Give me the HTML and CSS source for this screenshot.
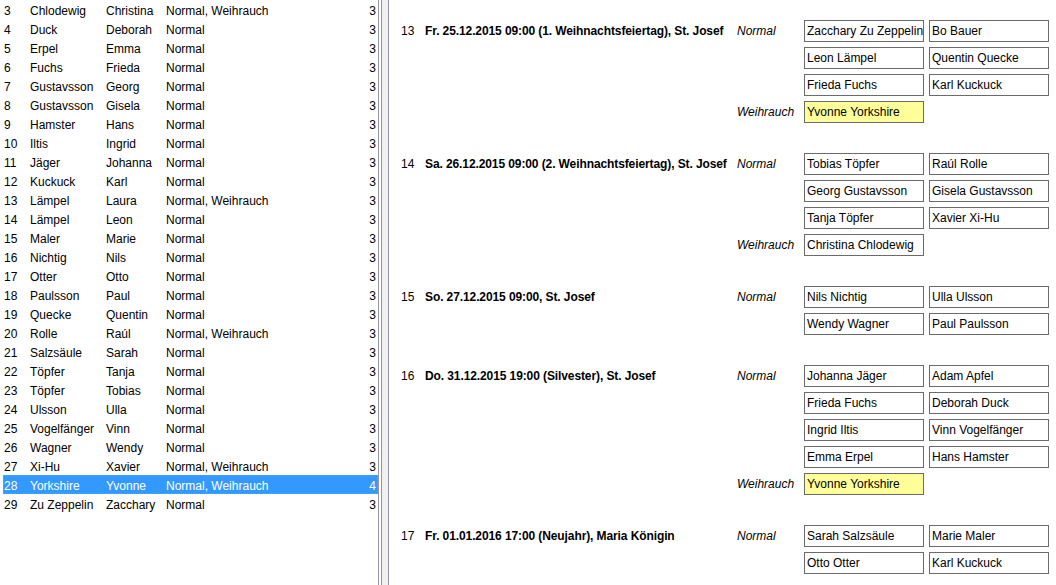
FILE: index.html
```html
<!DOCTYPE html>
<html lang="de">
<head>
<meta charset="utf-8">
<title>Messdiener</title>
<link rel="stylesheet" href="styles.css">
</head>
<body>
<div class="app">
  <div class="left">
    <div class="list">
      <div class="row"><span class="c-num">3</span><span class="c-last">Chlodewig</span><span class="c-first">Christina</span><span class="c-type">Normal, Weihrauch</span><span class="c-cnt">3</span></div>
      <div class="row"><span class="c-num">4</span><span class="c-last">Duck</span><span class="c-first">Deborah</span><span class="c-type">Normal</span><span class="c-cnt">3</span></div>
      <div class="row"><span class="c-num">5</span><span class="c-last">Erpel</span><span class="c-first">Emma</span><span class="c-type">Normal</span><span class="c-cnt">3</span></div>
      <div class="row"><span class="c-num">6</span><span class="c-last">Fuchs</span><span class="c-first">Frieda</span><span class="c-type">Normal</span><span class="c-cnt">3</span></div>
      <div class="row"><span class="c-num">7</span><span class="c-last">Gustavsson</span><span class="c-first">Georg</span><span class="c-type">Normal</span><span class="c-cnt">3</span></div>
      <div class="row"><span class="c-num">8</span><span class="c-last">Gustavsson</span><span class="c-first">Gisela</span><span class="c-type">Normal</span><span class="c-cnt">3</span></div>
      <div class="row"><span class="c-num">9</span><span class="c-last">Hamster</span><span class="c-first">Hans</span><span class="c-type">Normal</span><span class="c-cnt">3</span></div>
      <div class="row"><span class="c-num">10</span><span class="c-last">Iltis</span><span class="c-first">Ingrid</span><span class="c-type">Normal</span><span class="c-cnt">3</span></div>
      <div class="row"><span class="c-num">11</span><span class="c-last">Jäger</span><span class="c-first">Johanna</span><span class="c-type">Normal</span><span class="c-cnt">3</span></div>
      <div class="row"><span class="c-num">12</span><span class="c-last">Kuckuck</span><span class="c-first">Karl</span><span class="c-type">Normal</span><span class="c-cnt">3</span></div>
      <div class="row"><span class="c-num">13</span><span class="c-last">Lämpel</span><span class="c-first">Laura</span><span class="c-type">Normal, Weihrauch</span><span class="c-cnt">3</span></div>
      <div class="row"><span class="c-num">14</span><span class="c-last">Lämpel</span><span class="c-first">Leon</span><span class="c-type">Normal</span><span class="c-cnt">3</span></div>
      <div class="row"><span class="c-num">15</span><span class="c-last">Maler</span><span class="c-first">Marie</span><span class="c-type">Normal</span><span class="c-cnt">3</span></div>
      <div class="row"><span class="c-num">16</span><span class="c-last">Nichtig</span><span class="c-first">Nils</span><span class="c-type">Normal</span><span class="c-cnt">3</span></div>
      <div class="row"><span class="c-num">17</span><span class="c-last">Otter</span><span class="c-first">Otto</span><span class="c-type">Normal</span><span class="c-cnt">3</span></div>
      <div class="row"><span class="c-num">18</span><span class="c-last">Paulsson</span><span class="c-first">Paul</span><span class="c-type">Normal</span><span class="c-cnt">3</span></div>
      <div class="row"><span class="c-num">19</span><span class="c-last">Quecke</span><span class="c-first">Quentin</span><span class="c-type">Normal</span><span class="c-cnt">3</span></div>
      <div class="row"><span class="c-num">20</span><span class="c-last">Rolle</span><span class="c-first">Raúl</span><span class="c-type">Normal, Weihrauch</span><span class="c-cnt">3</span></div>
      <div class="row"><span class="c-num">21</span><span class="c-last">Salzsäule</span><span class="c-first">Sarah</span><span class="c-type">Normal</span><span class="c-cnt">3</span></div>
      <div class="row"><span class="c-num">22</span><span class="c-last">Töpfer</span><span class="c-first">Tanja</span><span class="c-type">Normal</span><span class="c-cnt">3</span></div>
      <div class="row"><span class="c-num">23</span><span class="c-last">Töpfer</span><span class="c-first">Tobias</span><span class="c-type">Normal</span><span class="c-cnt">3</span></div>
      <div class="row"><span class="c-num">24</span><span class="c-last">Ulsson</span><span class="c-first">Ulla</span><span class="c-type">Normal</span><span class="c-cnt">3</span></div>
      <div class="row"><span class="c-num">25</span><span class="c-last">Vogelfänger</span><span class="c-first">Vinn</span><span class="c-type">Normal</span><span class="c-cnt">3</span></div>
      <div class="row"><span class="c-num">26</span><span class="c-last">Wagner</span><span class="c-first">Wendy</span><span class="c-type">Normal</span><span class="c-cnt">3</span></div>
      <div class="row"><span class="c-num">27</span><span class="c-last">Xi-Hu</span><span class="c-first">Xavier</span><span class="c-type">Normal, Weihrauch</span><span class="c-cnt">3</span></div>
      <div class="row selected"><span class="c-num">28</span><span class="c-last">Yorkshire</span><span class="c-first">Yvonne</span><span class="c-type">Normal, Weihrauch</span><span class="c-cnt">4</span></div>
      <div class="row"><span class="c-num">29</span><span class="c-last">Zu Zeppelin</span><span class="c-first">Zacchary</span><span class="c-type">Normal</span><span class="c-cnt">3</span></div>
    </div>
  </div>
  <div class="splitter"></div>
  <div class="right">
    <div class="event">
      <span class="ev-num">13</span>
      <span class="ev-title">Fr. 25.12.2015 09:00 (1. Weihnachtsfeiertag), St. Josef</span>
      <div class="groups">
        <div class="group"><span class="g-label">Normal</span>
          <div class="boxes"><span class="box">Zacchary Zu Zeppelin</span><span class="box">Bo Bauer</span><span class="box">Leon Lämpel</span><span class="box">Quentin Quecke</span><span class="box">Frieda Fuchs</span><span class="box">Karl Kuckuck</span></div>
        </div>
        <div class="group"><span class="g-label">Weihrauch</span>
          <div class="boxes"><span class="box hl">Yvonne Yorkshire</span></div>
        </div>
      </div>
    </div>
    <div class="event">
      <span class="ev-num">14</span>
      <span class="ev-title">Sa. 26.12.2015 09:00 (2. Weihnachtsfeiertag), St. Josef</span>
      <div class="groups">
        <div class="group"><span class="g-label">Normal</span>
          <div class="boxes"><span class="box">Tobias Töpfer</span><span class="box">Raúl Rolle</span><span class="box">Georg Gustavsson</span><span class="box">Gisela Gustavsson</span><span class="box">Tanja Töpfer</span><span class="box">Xavier Xi-Hu</span></div>
        </div>
        <div class="group"><span class="g-label">Weihrauch</span>
          <div class="boxes"><span class="box">Christina Chlodewig</span></div>
        </div>
      </div>
    </div>
    <div class="event">
      <span class="ev-num">15</span>
      <span class="ev-title">So. 27.12.2015 09:00, St. Josef</span>
      <div class="groups">
        <div class="group"><span class="g-label">Normal</span>
          <div class="boxes"><span class="box">Nils Nichtig</span><span class="box">Ulla Ulsson</span><span class="box">Wendy Wagner</span><span class="box">Paul Paulsson</span></div>
        </div>
      </div>
    </div>
    <div class="event">
      <span class="ev-num">16</span>
      <span class="ev-title">Do. 31.12.2015 19:00 (Silvester), St. Josef</span>
      <div class="groups">
        <div class="group"><span class="g-label">Normal</span>
          <div class="boxes"><span class="box">Johanna Jäger</span><span class="box">Adam Apfel</span><span class="box">Frieda Fuchs</span><span class="box">Deborah Duck</span><span class="box">Ingrid Iltis</span><span class="box">Vinn Vogelfänger</span><span class="box">Emma Erpel</span><span class="box">Hans Hamster</span></div>
        </div>
        <div class="group"><span class="g-label">Weihrauch</span>
          <div class="boxes"><span class="box hl">Yvonne Yorkshire</span></div>
        </div>
      </div>
    </div>
    <div class="event">
      <span class="ev-num">17</span>
      <span class="ev-title">Fr. 01.01.2016 17:00 (Neujahr), Maria Königin</span>
      <div class="groups">
        <div class="group"><span class="g-label">Normal</span>
          <div class="boxes"><span class="box">Sarah Salzsäule</span><span class="box">Marie Maler</span><span class="box">Otto Otter</span><span class="box">Karl Kuckuck</span></div>
        </div>
      </div>
    </div>
  </div>
</div>
</body>
</html>
```

FILE: styles.css
```css
html, body {
  margin: 0;
  padding: 0;
  background: #ffffff;
}
body {
  font-family: "Liberation Sans", Arial, sans-serif;
  font-size: 12px;
  color: #000000;
  width: 1056px;
  height: 585px;
  overflow: hidden;
}
.app {
  display: flex;
  height: 585px;
}
.left {
  width: 378px;
  border-right: 1px solid #9597a6;
  background: #ffffff;
  flex: none;
}
.list {
  padding-left: 3px;
}
.row {
  display: flex;
  height: 19px;
  padding-top: 4px;
  line-height: 15px;
  box-sizing: border-box;
  white-space: nowrap;
}
.row.selected {
  background: #3399ff;
  color: #ffffff;
  outline: 1px dotted #d9893a;
  outline-offset: -1px;
}
.c-num { width: 26px; padding-left: 1px; box-sizing: border-box; }
.c-last { width: 76px; padding-left: 1px; box-sizing: border-box; }
.c-first { width: 60px; padding-left: 1px; box-sizing: border-box; }
.c-type { flex: 1; padding-left: 1px; }
.c-cnt { width: 20px; text-align: right; padding-right: 2px; box-sizing: border-box; }
.splitter {
  width: 8px;
  margin-left: 2px;
  border-left: 1px solid #9597a6;
  border-right: 1px solid #9597a6;
  background: #f0f0f0;
  flex: none;
  box-sizing: border-box;
}
.right {
  flex: 1;
  padding: 20px 0 0 12px;
  display: flex;
  flex-direction: column;
  gap: 30px;
}
.event {
  display: flex;
  align-items: flex-start;
}
.ev-num {
  width: 24px;
  line-height: 22px;
  flex: none;
}
.ev-title {
  width: 312px;
  font-weight: bold;
  letter-spacing: -0.1px;
  line-height: 22px;
  flex: none;
  white-space: nowrap;
}
.groups {
  display: flex;
  flex-direction: column;
  gap: 5px;
}
.group {
  display: flex;
  align-items: flex-start;
}
.g-label {
  width: 67px;
  font-style: italic;
  line-height: 22px;
  flex: none;
}
.boxes {
  display: grid;
  grid-template-columns: 120px 120px;
  gap: 5px;
}
.box {
  height: 22px;
  line-height: 20px;
  box-sizing: border-box;
  border: 1px solid #6b6b6b;
  padding-left: 2px;
  white-space: nowrap;
  overflow: hidden;
  background: #ffffff;
}
.box.hl {
  background: #ffff99;
}
```
